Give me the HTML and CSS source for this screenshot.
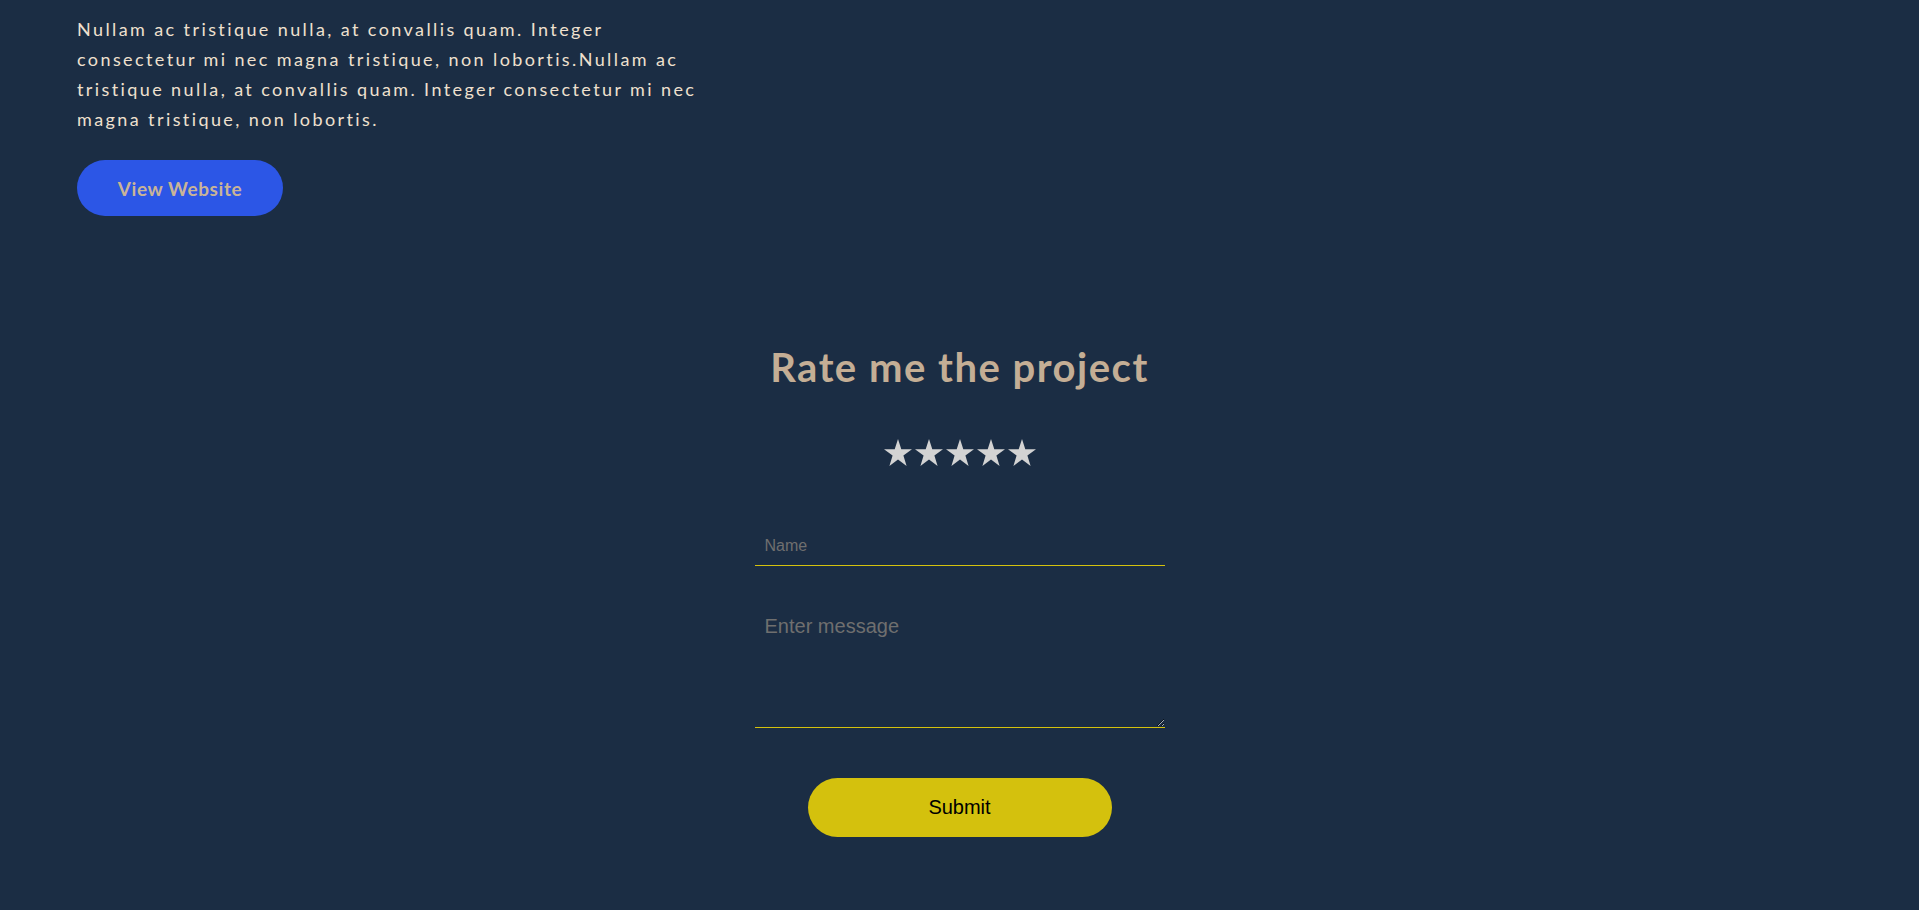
FILE: index.html
```html
<!DOCTYPE html>
<html lang="en">
<head>
<meta charset="utf-8">
<title>Project</title>
<link rel="stylesheet" href="styles.css">
</head>
<body>
<section class="project">
  <p class="project-text">Nullam ac tristique nulla, at convallis quam. Integer consectetur mi nec magna tristique, non lobortis.Nullam ac tristique nulla, at convallis quam. Integer consectetur mi nec magna tristique, non lobortis.</p>
  <a class="btn-view" href="#">View Website</a>
</section>
<section class="rate">
  <h2 class="rate-title">Rate me the project</h2>
  <div class="stars">
    <svg class="star" viewBox="0 0 28 27"><polygon points="14,0 17.3,10.2 28,10.2 19.4,16.6 22.6,27 14,20.6 5.4,27 8.6,16.6 0,10.2 10.7,10.2"/></svg>
    <svg class="star" viewBox="0 0 28 27"><polygon points="14,0 17.3,10.2 28,10.2 19.4,16.6 22.6,27 14,20.6 5.4,27 8.6,16.6 0,10.2 10.7,10.2"/></svg>
    <svg class="star" viewBox="0 0 28 27"><polygon points="14,0 17.3,10.2 28,10.2 19.4,16.6 22.6,27 14,20.6 5.4,27 8.6,16.6 0,10.2 10.7,10.2"/></svg>
    <svg class="star" viewBox="0 0 28 27"><polygon points="14,0 17.3,10.2 28,10.2 19.4,16.6 22.6,27 14,20.6 5.4,27 8.6,16.6 0,10.2 10.7,10.2"/></svg>
    <svg class="star" viewBox="0 0 28 27"><polygon points="14,0 17.3,10.2 28,10.2 19.4,16.6 22.6,27 14,20.6 5.4,27 8.6,16.6 0,10.2 10.7,10.2"/></svg>
  </div>
  <form class="rate-form">
    <input class="field-name" type="text" placeholder="Name">
    <textarea class="field-message" placeholder="Enter message"></textarea>
    <button class="btn-submit" type="button">Submit</button>
  </form>
</section>
</body>
</html>
```

FILE: styles.css
```css
* {
  box-sizing: border-box;
}

html, body {
  margin: 0;
  padding: 0;
}

body {
  background: #1b2d44;
  font-family: "Lato", "Liberation Sans", sans-serif;
  min-height: 910px;
}

.project {
  padding-left: 77px;
  display: flex;
  flex-direction: column;
  align-items: flex-start;
}

.project-text {
  width: 630px;
  margin: 14px 0 26px 0;
  font-size: 18px;
  line-height: 30px;
  letter-spacing: 2.4px;
  color: #efe0cf;
}

.btn-view {
  display: flex;
  align-items: center;
  justify-content: center;
  width: 206px;
  height: 56px;
  border-radius: 28px;
  background: #2c56e6;
  color: #c9b497;
  font-weight: 700;
  font-size: 19px;
  letter-spacing: 0.6px;
  text-decoration: none;
}

.rate {
  display: flex;
  flex-direction: column;
  align-items: center;
  padding-top: 127px;
}

.rate-title {
  margin: 0;
  font-size: 40px;
  line-height: 48px;
  font-weight: 700;
  letter-spacing: 1.5px;
  color: #c4ae95;
}

.stars {
  display: flex;
  gap: 3px;
  margin-top: 48px;
}

.star {
  display: block;
  width: 28px;
  height: 27px;
  fill: #d3d3d3;
}

.rate-form {
  width: 410px;
  margin-top: 60px;
  display: flex;
  flex-direction: column;
  align-items: center;
}

.field-name,
.field-message {
  width: 100%;
  background: transparent;
  border: none;
  border-bottom: 1px solid #d4c10d;
  border-radius: 0;
  outline: none;
  padding: 10px;
  font-family: "Liberation Sans", Arial, sans-serif;
  color: #ddd;
}

.field-name {
  height: 40px;
  font-size: 16px;
}

.field-message {
  margin-top: 39px;
  height: 123px;
  font-size: 20px;
  resize: both;
}

.field-name::placeholder,
.field-message::placeholder {
  color: #6f6f6f;
}

.btn-submit {
  margin-top: 50px;
  width: 304px;
  height: 59px;
  border: none;
  border-radius: 30px;
  background: #d4c10d;
  color: #000;
  font-family: "Liberation Sans", Arial, sans-serif;
  font-size: 20px;
  cursor: pointer;
}
```
